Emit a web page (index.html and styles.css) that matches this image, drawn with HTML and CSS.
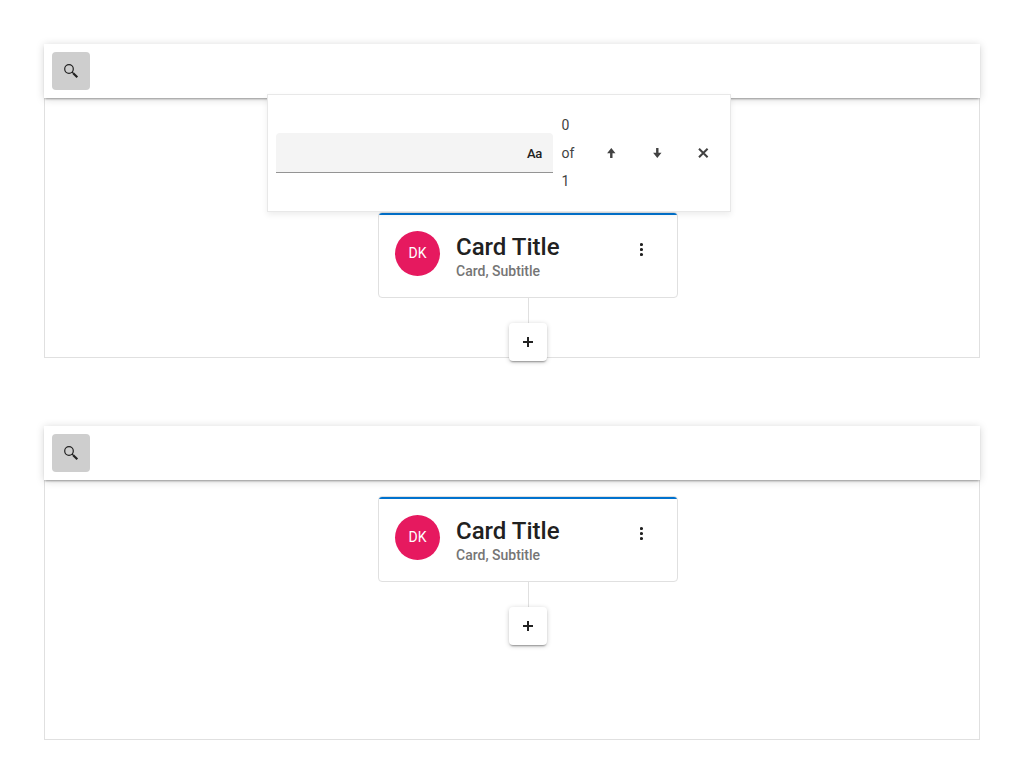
FILE: index.html
```html
<!DOCTYPE html>
<html lang="en">
<head>
<meta charset="utf-8">
<title>Org chart search</title>
<link rel="stylesheet" href="styles.css">
</head>
<body>
<section class="panel">
  <header class="toolbar">
    <button class="tool" aria-label="Search"><svg width="16" height="16" viewBox="0 0 16 16"><circle cx="6" cy="6" r="4.3" fill="none" stroke="#222" stroke-width="1.2"/><path d="M9 9l1.7 1.7" stroke="#222" stroke-width="1.2"/><path d="M10.2 10.2l4.1 4.1" stroke="#222" stroke-width="2.2"/></svg></button>
  </header>
  <div class="search">
    <div class="field"><span>Aa</span></div>
    <div class="count"><span>0</span><span>of</span><span>1</span></div>
    <button class="flat" aria-label="Previous"><svg width="11" height="10" viewBox="0 0 11 10"><path d="M5.3 0L9.5 5.2H6.5V10H4.1V5.2H1.1Z" fill="#424242"/></svg></button>
    <button class="flat" aria-label="Next"><svg width="11" height="10" viewBox="0 0 11 10"><path d="M5.3 10L9.5 4.8H6.5V0H4.1V4.8H1.1Z" fill="#424242"/></svg></button>
    <button class="flat" aria-label="Close"><svg width="11" height="10" viewBox="0 0 11 10"><path d="M1 .7l8.6 8.6M9.6 .7l-8.6 8.6" stroke="#424242" stroke-width="2"/></svg></button>
  </div>
  <div class="diagram lowered">
    <article class="card">
      <div class="avatar">DK</div>
      <div class="names"><h2>Card Title</h2><p>Card, Subtitle</p></div>
      <svg class="more" width="4" height="15" viewBox="0 0 4 15"><g fill="#222"><circle cx="1.5" cy="2.5" r="1.6"/><circle cx="1.5" cy="7.5" r="1.6"/><circle cx="1.5" cy="12.5" r="1.6"/></g></svg>
    </article>
    <div class="line"></div>
    <button class="add" aria-label="Add"><svg width="10" height="10" viewBox="0 0 10 10"><path d="M0 5H10M5 0V10" stroke="#222" stroke-width="2"/></svg></button>
  </div>
</section>
<section class="panel">
  <header class="toolbar">
    <button class="tool" aria-label="Search"><svg width="16" height="16" viewBox="0 0 16 16"><circle cx="6" cy="6" r="4.3" fill="none" stroke="#222" stroke-width="1.2"/><path d="M9 9l1.7 1.7" stroke="#222" stroke-width="1.2"/><path d="M10.2 10.2l4.1 4.1" stroke="#222" stroke-width="2.2"/></svg></button>
  </header>
  <div class="diagram">
    <article class="card">
      <div class="avatar">DK</div>
      <div class="names"><h2>Card Title</h2><p>Card, Subtitle</p></div>
      <svg class="more" width="4" height="15" viewBox="0 0 4 15"><g fill="#222"><circle cx="1.5" cy="2.5" r="1.6"/><circle cx="1.5" cy="7.5" r="1.6"/><circle cx="1.5" cy="12.5" r="1.6"/></g></svg>
    </article>
    <div class="line"></div>
    <button class="add" aria-label="Add"><svg width="10" height="10" viewBox="0 0 10 10"><path d="M0 5H10M5 0V10" stroke="#222" stroke-width="2"/></svg></button>
  </div>
</section>
</body>
</html>
```
FILE: styles.css
```css
* { box-sizing: border-box; }
body {
  margin: 0;
  padding: 44px;
  display: flex;
  flex-direction: column;
  gap: 68px;
  background: #fff;
  font-family: Roboto, sans-serif;
  font-size: 14px;
  color: #212121;
}
button {
  padding: 0;
  border: 0;
  display: flex;
  align-items: center;
  justify-content: center;
  background: none;
}
svg { display: block; }
.panel { position: relative; height: 314px; }
.toolbar {
  position: relative;
  z-index: 1;
  height: 54px;
  padding: 8px;
  background: #fff;
  box-shadow: 0 2px 2px -1px rgba(0,0,0,.36), 0 1px 8px rgba(0,0,0,.17);
}
.tool {
  width: 38px;
  height: 38px;
  padding: 0 1px 1px 0;
  border-radius: 4px;
  background: #cecece;
}
.diagram {
  height: 260px;
  padding: 16px 0 0 31px;
  border: 1px solid #e0e0e0;
  border-top: 0;
  display: flex;
  flex-direction: column;
  align-items: center;
}
.diagram.lowered { padding-top: 114px; }
.card {
  position: relative;
  flex: none;
  width: 300px;
  height: 86px;
  padding: 18px 33px 0 16px;
  border: 1px solid #e0e0e0;
  border-radius: 4px;
  display: flex;
  background: #fff;
  overflow: hidden;
}
.card::before {
  content: "";
  position: absolute;
  left: 0;
  right: 0;
  top: 0;
  height: 2px;
  background: #0072ce;
}
.avatar {
  width: 45px;
  height: 45px;
  margin-right: 16.5px;
  padding: 0 0 2px 1px;
  border-radius: 50%;
  display: grid;
  place-items: center;
  background: #e6195f;
  color: #fff;
}
.names { flex: 1; }
.names h2 {
  margin: 2px 0 0;
  font-size: 24px;
  line-height: 28px;
  font-weight: 500;
}
.names p {
  margin: 2px 0 0;
  line-height: 16px;
  font-weight: 500;
  color: #757575;
}
.more { margin-top: 11px; }
.line {
  flex: none;
  width: 1px;
  height: 25px;
  margin-left: 1px;
  background: #e0e0e0;
}
.add {
  flex: none;
  width: 38px;
  height: 38px;
  border-radius: 4px;
  background: #fff;
  box-shadow: 0 2px 2px -1px rgba(0,0,0,.36), 0 1px 5px rgba(0,0,0,.2);
}
.search {
  position: absolute;
  z-index: 2;
  left: 223px;
  top: 50px;
  width: 464px;
  height: 118px;
  padding-left: 8px;
  border: 1px solid #e8e8e8;
  display: flex;
  align-items: center;
  background: #fff;
  box-shadow: 0 3px 6px rgba(0,0,0,.07);
}
.field {
  flex: none;
  width: 277px;
  height: 40px;
  padding: 1px 11px 0 0;
  border-bottom: 1px solid #949494;
  border-radius: 4px 4px 0 0;
  display: flex;
  align-items: center;
  justify-content: flex-end;
  background: #f4f4f4;
  font-size: 13px;
  font-weight: 500;
  letter-spacing: -.3px;
}
.count {
  flex: none;
  width: 26px;
  margin-left: 8.5px;
  display: flex;
  flex-direction: column;
  line-height: 28px;
  color: #424242;
}
.flat {
  flex: none;
  width: 46px;
  height: 38px;
  padding-left: 1px;
}
```
